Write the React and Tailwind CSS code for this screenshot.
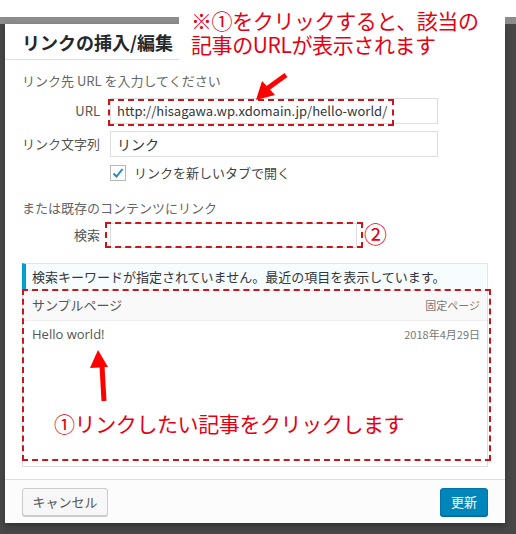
import React from "react";

const jp = { fontFamily: '"Noto Sans CJK JP", "Noto Sans", sans-serif' };

export default function App() {
  return (
    <div className="relative w-[516px] h-[534px] overflow-hidden bg-[#474747]" style={jp}>
      <div className="h-[17px] bg-white" />
      <div className="h-[7px] bg-[#8c8c8c]" />
      <div className="ml-[5px] w-[500px] h-[499px] bg-white flex flex-col shadow-[0_3px_6px_rgba(0,0,0,0.3)]">
        <div className="h-[36px] border-b border-[#dddddd] pl-[17px] flex items-center">
          <span className="text-[18px] font-bold text-[#23282d] leading-none">リンクの挿入/編集</span>
        </div>
        <div className="flex-1 px-[17px] pt-[11px] pb-[12px] flex flex-col">
          <div className="text-[13px] leading-[20px] text-[#666]">リンク先 URL を入力してください</div>
          <div className="mt-[7px] flex items-center">
            <div className="w-[78px] text-right text-[13px] text-[#555]">URL</div>
            <div className="ml-[10px] w-[328px] h-[26px] border border-[#dddddd] flex items-center px-[6px] text-[13px] text-[#32373c]">
              http://hisagawa.wp.xdomain.jp/hello-world/
            </div>
          </div>
          <div className="mt-[7px] flex items-center">
            <div className="w-[78px] text-right text-[13px] text-[#555]">リンク文字列</div>
            <div className="ml-[10px] w-[328px] h-[26px] border border-[#dddddd] flex items-center px-[6px] text-[14px] text-[#32373c]">
              リンク
            </div>
          </div>
          <div className="mt-[6px] ml-[88px] flex items-center">
            <div className="w-[16px] h-[16px] border border-[#b4b9be] bg-white flex items-center justify-center">
              <svg width="12" height="12" viewBox="0 0 12 12">
                <path d="M1.5 6.5 L4.5 9.5 L10.5 2" fill="none" stroke="#1e8cbe" strokeWidth="2" />
              </svg>
            </div>
            <span className="ml-[8px] text-[13px] text-[#444]">リンクを新しいタブで開く</span>
          </div>
          <div className="mt-[15px] text-[13px] leading-[20px] text-[#666]">または既存のコンテンツにリンク</div>
          <div className="mt-[5px] flex items-center">
            <div className="w-[78px] text-right text-[13px] text-[#555]">検索</div>
            <div className="ml-[10px] w-[247px] h-[25px] border border-[#dddddd]" />
          </div>
          <div className="mt-[15px] h-[28px] border border-[#e5e5e5] border-l-4 border-l-[#00a0d2] bg-[#f7fcfe] flex items-center pl-[6px] text-[13px] text-[#32373c]">
            検索キーワードが指定されていません。最近の項目を表示しています。
          </div>
          <div className="flex-1 border border-[#dddddd] border-t-0 flex flex-col">
            <div className="h-[30px] bg-[#f9f9f9] border-b border-[#eeeeee] flex items-center justify-between pl-[9px] pr-[7px]">
              <span className="text-[13px] text-[#555]">サンプルページ</span>
              <span className="text-[11px] text-[#777]">固定ページ</span>
            </div>
            <div className="h-[28px] flex items-center justify-between pl-[9px] pr-[7px]">
              <span className="text-[13px] text-[#555]" style={{ fontFamily: '"Open Sans", "Noto Sans CJK JP", sans-serif' }}>Hello world!</span>
              <span className="text-[11px] text-[#777]">2018年4月29日</span>
            </div>
          </div>
        </div>
        <div className="h-[44px] border-t border-[#dddddd] bg-[#fcfcfc] flex items-start justify-between px-[17px] pt-[8px]">
          <div className="w-[86px] h-[28px] rounded-[3px] border border-[#cccccc] bg-[#f7f7f7] shadow-[0_1px_0_#ccc] flex items-center justify-center text-[13px] text-[#555]">
            キャンセル
          </div>
          <div className="w-[48px] h-[28px] rounded-[3px] border border-[#0073aa] bg-[#0085ba] shadow-[0_1px_0_#006799] flex items-center justify-center text-[13px] text-white">
            更新
          </div>
        </div>
      </div>

      {/* annotation box top */}
      <div className="absolute left-[179px] top-0 w-[326px] h-[66px] bg-white">
        <div className="pl-[12px] pt-[8px] text-[21px] leading-[24px] text-[#e60012] tracking-[-0.4px]">
          <div>※①をクリックすると、該当の</div>
          <div>記事のURLが表示されます</div>
        </div>
      </div>

      {/* dashed boxes */}
      <div className="absolute left-[108px] top-[99px] w-[286px] h-[27px] border-2 border-dashed border-[#c8161d]" />
      <div className="absolute left-[105px] top-[222px] w-[258px] h-[26px] border-2 border-dashed border-[#c8161d]" />
      <div className="absolute left-[22px] top-[289px] w-[469px] h-[172px] border-2 border-dashed border-[#c8161d]" />

      <div className="absolute left-[364px] top-[218px] text-[23px] leading-[30px] text-[#e60012]">②</div>

      {/* arrows */}
      <svg className="absolute left-0 top-0" width="516" height="534" viewBox="0 0 516 534">
        <path d="M286 75 L268 88" stroke="#ff0000" strokeWidth="5" strokeLinecap="butt" fill="none" />
        <polygon points="256,100 262,81 275,95" fill="#ff0000" />
        <path d="M102 366 L104 401" stroke="#ff0000" strokeWidth="5" fill="none" />
        <polygon points="98,350 90,368 108,367" fill="#ff0000" />
      </svg>

      <div className="absolute left-[54px] top-[408px] text-[21px] leading-[30px] text-[#e60012] tracking-[-0.4px]">
        ①リンクしたい記事をクリックします
      </div>
    </div>
  );
}
